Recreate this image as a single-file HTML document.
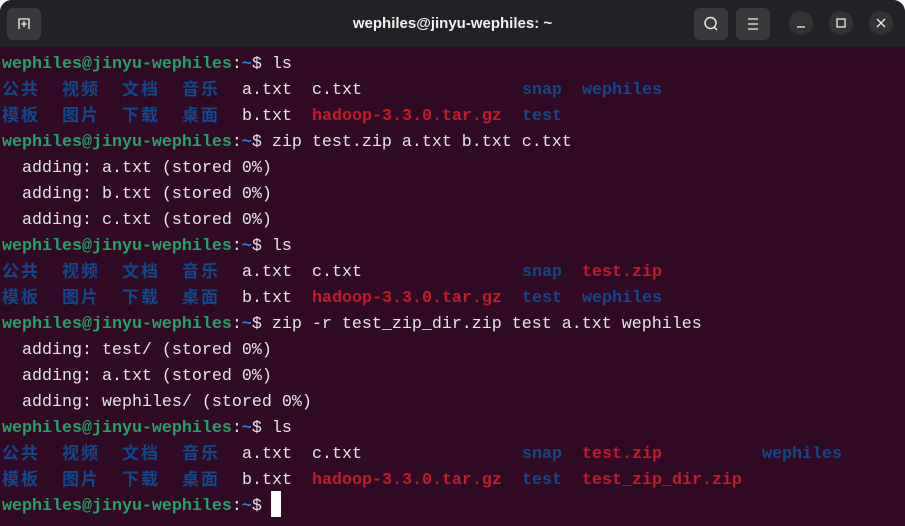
<!DOCTYPE html>
<html><head><meta charset="utf-8"><style>
html,body{margin:0;padding:0;width:905px;height:526px;overflow:hidden;background:#fafafa}
.win{position:absolute;left:0;top:0;width:905px;height:526px;background:#300a24;border-radius:12px 12px 0 0;overflow:hidden}
.tb{position:absolute;left:0;top:0;width:905px;height:47px;background:#222226}
.title{position:absolute;left:0;right:0;top:0;height:47px;text-align:center;color:#f2f2f2;font-family:"Liberation Sans",sans-serif;font-weight:bold;font-size:15px;line-height:47px}
.btn{position:absolute;top:8px;width:34px;height:32px;background:#3a3a3c;border-radius:6px}
.cb{position:absolute;top:11px;width:24px;height:24px;border-radius:12px;background:#333335}
.term{position:absolute;left:2px;top:52px;font-family:"Liberation Mono","Noto Sans CJK SC",monospace;font-size:16.67px;color:#e6e6e6}
.l{position:relative;height:26px;line-height:26px;white-space:pre}
.l span{position:absolute;top:0}
.g{color:#26a269;font-weight:bold}.bl{color:#12488b;font-weight:bold}.r{color:#c01c28;font-weight:bold}.p{color:#2a7bde;font-weight:bold}
.l span.cj{font-family:"Noto Sans CJK SC",sans-serif;font-weight:bold;color:#12488b;letter-spacing:2px;font-size:17px;line-height:20px;top:0px}
</style></head><body><div class="win">
<div class="tb">
<div class="btn" style="left:7px"><svg width="34" height="32"><path d="M12 21V11h10v10M17 13v6M14 16h6" stroke="#eee" fill="none" stroke-width="1.3"/></svg></div>
<div class="title">wephiles@jinyu-wephiles: ~</div>
<div class="btn" style="left:694px"><svg width="34" height="32"><circle cx="16.5" cy="15" r="5.5" stroke="#eee" fill="none" stroke-width="1.4"/><path d="M20 19l3 3" stroke="#eee" stroke-width="1.4"/></svg></div>
<div class="btn" style="left:736px"><svg width="34" height="32"><path d="M12 11h10M12 16h10M12 21h10" stroke="#eee" stroke-width="1.3"/></svg></div>
<div class="cb" style="left:789px"><svg width="24" height="24"><path d="M8 16h8" stroke="#eee" stroke-width="1.3"/></svg></div>
<div class="cb" style="left:829px"><svg width="24" height="24"><rect x="8" y="8" width="8" height="8" stroke="#eee" fill="none" stroke-width="1.3"/></svg></div>
<div class="cb" style="left:869px"><svg width="24" height="24"><path d="M8 8l8 8M16 8l-8 8" stroke="#eee" stroke-width="1.3"/></svg></div>
</div>
<div class="term">
<div class="l"><span style="left:0"><b class="g">wephiles@jinyu-wephiles</b>:<b class="p">~</b>$ ls</span></div>
<div class="l"><span class="cj" style="left:0">公共</span><span class="cj" style="left:60px">视频</span><span class="cj" style="left:120px">文档</span><span class="cj" style="left:180px">音乐</span><span style="left:240px">a.txt</span><span style="left:310px">c.txt</span><span class="bl" style="left:520px">snap</span><span class="bl" style="left:580px">wephiles</span></div>
<div class="l"><span class="cj" style="left:0">模板</span><span class="cj" style="left:60px">图片</span><span class="cj" style="left:120px">下载</span><span class="cj" style="left:180px">桌面</span><span style="left:240px">b.txt</span><span class="r" style="left:310px">hadoop-3.3.0.tar.gz</span><span class="bl" style="left:520px">test</span></div>
<div class="l"><span style="left:0"><b class="g">wephiles@jinyu-wephiles</b>:<b class="p">~</b>$ zip test.zip a.txt b.txt c.txt</span></div>
<div class="l"><span style="left:0">  adding: a.txt (stored 0%)</span></div>
<div class="l"><span style="left:0">  adding: b.txt (stored 0%)</span></div>
<div class="l"><span style="left:0">  adding: c.txt (stored 0%)</span></div>
<div class="l"><span style="left:0"><b class="g">wephiles@jinyu-wephiles</b>:<b class="p">~</b>$ ls</span></div>
<div class="l"><span class="cj" style="left:0">公共</span><span class="cj" style="left:60px">视频</span><span class="cj" style="left:120px">文档</span><span class="cj" style="left:180px">音乐</span><span style="left:240px">a.txt</span><span style="left:310px">c.txt</span><span class="bl" style="left:520px">snap</span><span class="r" style="left:580px">test.zip</span></div>
<div class="l"><span class="cj" style="left:0">模板</span><span class="cj" style="left:60px">图片</span><span class="cj" style="left:120px">下载</span><span class="cj" style="left:180px">桌面</span><span style="left:240px">b.txt</span><span class="r" style="left:310px">hadoop-3.3.0.tar.gz</span><span class="bl" style="left:520px">test</span><span class="bl" style="left:580px">wephiles</span></div>
<div class="l"><span style="left:0"><b class="g">wephiles@jinyu-wephiles</b>:<b class="p">~</b>$ zip -r test_zip_dir.zip test a.txt wephiles</span></div>
<div class="l"><span style="left:0">  adding: test/ (stored 0%)</span></div>
<div class="l"><span style="left:0">  adding: a.txt (stored 0%)</span></div>
<div class="l"><span style="left:0">  adding: wephiles/ (stored 0%)</span></div>
<div class="l"><span style="left:0"><b class="g">wephiles@jinyu-wephiles</b>:<b class="p">~</b>$ ls</span></div>
<div class="l"><span class="cj" style="left:0">公共</span><span class="cj" style="left:60px">视频</span><span class="cj" style="left:120px">文档</span><span class="cj" style="left:180px">音乐</span><span style="left:240px">a.txt</span><span style="left:310px">c.txt</span><span class="bl" style="left:520px">snap</span><span class="r" style="left:580px">test.zip</span><span class="bl" style="left:760px">wephiles</span></div>
<div class="l"><span class="cj" style="left:0">模板</span><span class="cj" style="left:60px">图片</span><span class="cj" style="left:120px">下载</span><span class="cj" style="left:180px">桌面</span><span style="left:240px">b.txt</span><span class="r" style="left:310px">hadoop-3.3.0.tar.gz</span><span class="bl" style="left:520px">test</span><span class="r" style="left:580px">test_zip_dir.zip</span></div>
<div class="l"><span style="left:0"><b class="g">wephiles@jinyu-wephiles</b>:<b class="p">~</b>$ </span></div>
</div>
<div style="position:absolute;left:271px;top:491px;width:10px;height:26px;background:#fff"></div>
</div></body></html>
